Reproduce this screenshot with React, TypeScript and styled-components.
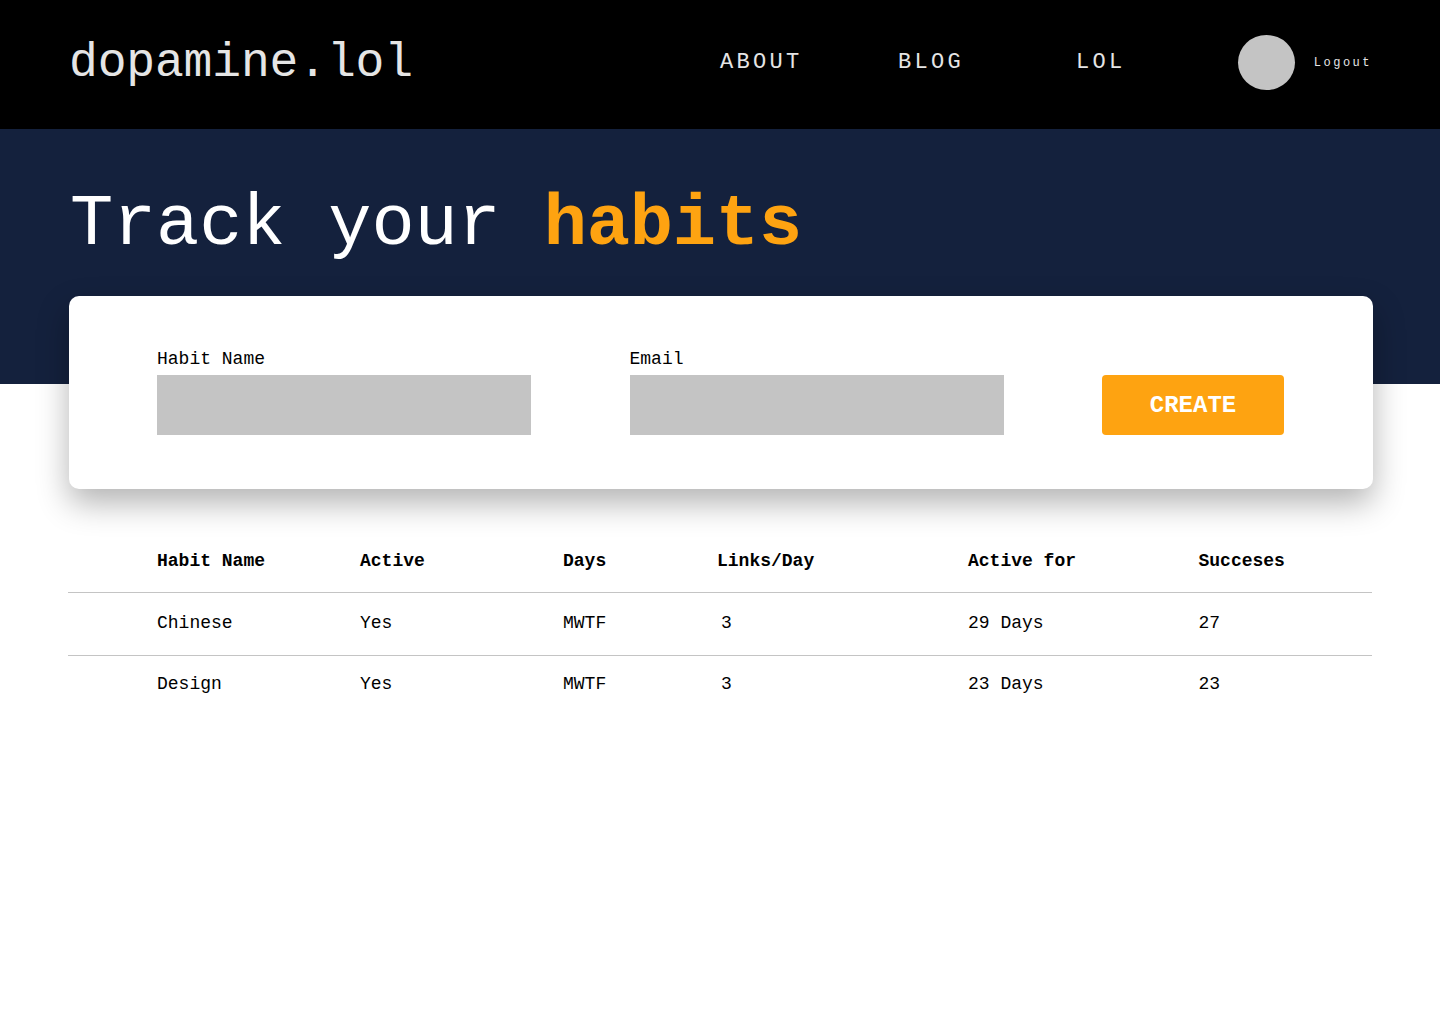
import React from 'react';
import styled, { createGlobalStyle } from 'styled-components';

const GlobalStyle = createGlobalStyle`
  body {
    margin: 0;
    background-color: #fff;
    font-family: "Liberation Mono", "Courier New", monospace;
  }
`;

const Page = styled.div`
  min-height: 1024px;
`;

// 상단 네비게이션
const Header = styled.header`
  height: 129px;
  background-color: #000;
  display: flex;
  align-items: center;
  padding: 0 68px 5px 69px;
  box-sizing: border-box;
`;

const Logo = styled.div`
  flex: none;
  font-size: 48px;
  letter-spacing: -0.15px;
  padding-top: 2px;
  color: #e5e5e5;
  width: 651px;
`;

const Nav = styled.nav`
  display: grid;
  grid-template-columns: 178px 178px auto;
  flex: 1;
`;

const NavLink = styled.a`
  font-size: 22px;
  letter-spacing: 3.3px;
  color: #e5e5e5;
`;

const Profile = styled.div`
  display: flex;
  align-items: center;
  gap: 19px;
`;

const Avatar = styled.div`
  width: 57px;
  height: 55px;
  border-radius: 50%;
  background-color: #c4c4c4;
`;

const Logout = styled.span`
  font-size: 12px;
  letter-spacing: 2.5px;
  padding-top: 2px;
  color: #e5e5e5;
`;

const Hero = styled.section`
  height: 255px;
  box-sizing: border-box;
  background-color: #14213d;
  padding: 55px 0 0 70px;
`;

const Title = styled.h1`
  margin: 0;
  font-size: 72px;
  line-height: 82px;
  letter-spacing: -0.15px;
  font-weight: 400;
  color: #fff;
`;

const Accent = styled.span`
  font-weight: 700;
  color: #fea311;
`;

const Card = styled.form`
  position: relative;
  margin: -88px 67px 0 69px;
  height: 193px;
  box-sizing: border-box;
  padding: 0 89px 54px 88px;
  background-color: #fff;
  border-radius: 10px;
  box-shadow: 0 14px 32px rgba(0, 0, 0, 0.3);
  display: flex;
  align-items: flex-end;
  justify-content: space-between;
`;

const Field = styled.label`
  display: flex;
  flex-direction: column;
  gap: 6px;
  font-size: 18px;
  line-height: 20px;
  color: #000;
`;

const Input = styled.div`
  width: 374px;
  height: 60px;
  background-color: #c4c4c4;
`;

const CreateButton = styled.button`
  width: 182px;
  height: 60px;
  border: none;
  border-radius: 4px;
  background-color: #fea311;
  color: #fff;
  font-family: inherit;
  font-size: 24px;
  font-weight: 700;
  padding: 0;
`;

const Table = styled.div`
  margin: 52px 68px 0;
  font-size: 18px;
  line-height: 21px;
  color: #000;
`;

const Row = styled.div<{ $head?: boolean; $last?: boolean }>`
  display: grid;
  grid-template-columns: 203px 203px 154px 251px 230.5px 1fr;
  padding: ${(p) => (p.$head ? '10px' : p.$last ? '18px' : '20px')} 0 ${(p) => (p.$head ? '20px' : '21px')} 89px;
  border-bottom: ${(p) => (p.$last ? 'none' : '1px solid #c4c4c4')};
  font-weight: ${(p) => (p.$head ? 700 : 400)};
`;

const CountCell = styled.div`
  padding-left: 4px;
`;

const habits = [
  { name: 'Chinese', active: 'Yes', days: 'MWTF', links: 3, age: '29 Days', wins: 27 },
  { name: 'Design', active: 'Yes', days: 'MWTF', links: 3, age: '23 Days', wins: 23 },
];

const App: React.FC = () => (
  <Page>
    <GlobalStyle />
    <Header>
      <Logo>dopamine.lol</Logo>
      <Nav>
        <NavLink>ABOUT</NavLink>
        <NavLink>BLOG</NavLink>
        <NavLink>LOL</NavLink>
      </Nav>
      <Profile>
        <Avatar />
        <Logout>Logout</Logout>
      </Profile>
    </Header>
    <Hero>
      <Title>
        Track your <Accent>habits</Accent>
      </Title>
    </Hero>
    <Card>
      <Field>
        Habit Name
        <Input />
      </Field>
      <Field>
        Email
        <Input />
      </Field>
      <CreateButton type="button">CREATE</CreateButton>
    </Card>
    <Table>
      <Row $head>
        <div>Habit Name</div>
        <div>Active</div>
        <div>Days</div>
        <div>Links/Day</div>
        <div>Active for</div>
        <div>Succeses</div>
      </Row>
      {habits.map((h, i) => (
        <Row key={h.name} $last={i === habits.length - 1}>
          <div>{h.name}</div>
          <div>{h.active}</div>
          <div>{h.days}</div>
          <CountCell>{h.links}</CountCell>
          <div>{h.age}</div>
          <div>{h.wins}</div>
        </Row>
      ))}
    </Table>
  </Page>
);

export default App;
